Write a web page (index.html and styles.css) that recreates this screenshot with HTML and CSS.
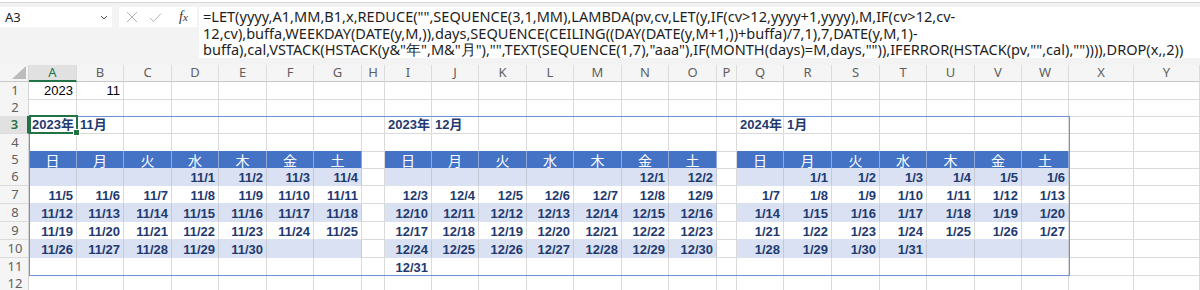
FILE: index.html
```html
<!DOCTYPE html>
<html lang="ja">
<head>
<meta charset="utf-8">
<title>Excel calendar</title>
<link rel="stylesheet" href="styles.css">
</head>
<body>
<div class="ribbon-edge"></div>
<div class="fbar">
  <div class="namebox">
    <span>A3</span>
    <svg class="chev" width="8" height="5" viewBox="0 0 8 5"><path d="M1 1 L4 4 L7 1" fill="none" stroke="#555" stroke-width="1"/></svg>
  </div>
  <div class="btns">
    <svg width="12" height="12" viewBox="0 0 12 12"><path d="M1 1 L11 11 M11 1 L1 11" stroke="#b4b4b4" stroke-width="1" fill="none"/></svg>
    <svg width="13" height="11" viewBox="0 0 13 11"><path d="M1 6 L4.5 9.5 L12 1.5" stroke="#b4b4b4" stroke-width="1" fill="none"/></svg>
    <span class="fx"><i>f</i><i class="x">x</i></span>
  </div>
  <div class="formula">
    <div class="fl">=LET(yyyy,A1,MM,B1,x,REDUCE("",SEQUENCE(3,1,MM),LAMBDA(pv,cv,LET(y,IF(cv&gt;12,yyyy+1,yyyy),M,IF(cv&gt;12,cv-</div>
    <div class="fl">12,cv),buffa,WEEKDAY(DATE(y,M,)),days,SEQUENCE(CEILING((DAY(DATE(y,M+1,))+buffa)/7,1),7,DATE(y,M,1)-</div>
    <div class="fl">buffa),cal,VSTACK(HSTACK(y&amp;"年",M&amp;"月"),"",TEXT(SEQUENCE(1,7),"aaa"),IF(MONTH(days)=M,days,"")),IFERROR(HSTACK(pv,"",cal),"")))),DROP(x,,2))</div>
  </div>
</div>

<div class="sheet">
  <div class="row colhead">
    <div class="corner"><svg width="14" height="13" viewBox="0 0 14 13"><path d="M14 0 L14 13 L0 13 Z" fill="#bcbcbc"/></svg></div>
    <div class="ch sel">A</div><div class="ch">B</div><div class="ch">C</div><div class="ch">D</div><div class="ch">E</div><div class="ch">F</div><div class="ch">G</div><div class="ch">H</div><div class="ch">I</div><div class="ch">J</div><div class="ch">K</div><div class="ch">L</div><div class="ch">M</div><div class="ch">N</div><div class="ch">O</div><div class="ch">P</div><div class="ch">Q</div><div class="ch">R</div><div class="ch">S</div><div class="ch">T</div><div class="ch">U</div><div class="ch">V</div><div class="ch">W</div><div class="ch">X</div><div class="ch">Y</div>
  </div>

  <div class="row h17">
    <div class="rh">1</div>
    <div class="c n">2023</div><div class="c n">11</div><div class="c"></div><div class="c"></div><div class="c"></div><div class="c"></div><div class="c"></div><div class="c"></div><div class="c"></div><div class="c"></div><div class="c"></div><div class="c"></div><div class="c"></div><div class="c"></div><div class="c"></div><div class="c"></div><div class="c"></div><div class="c"></div><div class="c"></div><div class="c"></div><div class="c"></div><div class="c"></div><div class="c"></div><div class="c"></div><div class="c"></div>
  </div>

  <div class="row h17">
    <div class="rh">2</div>
    <div class="c"></div><div class="c"></div><div class="c"></div><div class="c"></div><div class="c"></div><div class="c"></div><div class="c"></div><div class="c"></div><div class="c"></div><div class="c"></div><div class="c"></div><div class="c"></div><div class="c"></div><div class="c"></div><div class="c"></div><div class="c"></div><div class="c"></div><div class="c"></div><div class="c"></div><div class="c"></div><div class="c"></div><div class="c"></div><div class="c"></div><div class="c"></div><div class="c"></div>
  </div>

  <div class="row">
    <div class="rh sel">3</div>
    <div class="c t">2023年</div><div class="c t">11月</div><div class="c"></div><div class="c"></div><div class="c"></div><div class="c"></div><div class="c"></div><div class="c"></div>
    <div class="c t">2023年</div><div class="c t">12月</div><div class="c"></div><div class="c"></div><div class="c"></div><div class="c"></div><div class="c"></div><div class="c"></div>
    <div class="c t">2024年</div><div class="c t">1月</div><div class="c"></div><div class="c"></div><div class="c"></div><div class="c"></div><div class="c"></div><div class="c"></div><div class="c"></div>
  </div>

  <div class="row h17 pre">
    <div class="rh">4</div>
    <div class="c"></div><div class="c"></div><div class="c"></div><div class="c"></div><div class="c"></div><div class="c"></div><div class="c"></div><div class="c g"></div>
    <div class="c"></div><div class="c"></div><div class="c"></div><div class="c"></div><div class="c"></div><div class="c"></div><div class="c"></div><div class="c g"></div>
    <div class="c"></div><div class="c"></div><div class="c"></div><div class="c"></div><div class="c"></div><div class="c"></div><div class="c"></div><div class="c g"></div><div class="c g"></div>
  </div>

  <div class="row h17 wk">
    <div class="rh">5</div>
    <div class="c w">日</div><div class="c w">月</div><div class="c w">火</div><div class="c w">水</div><div class="c w">木</div><div class="c w">金</div><div class="c w">土</div><div class="c g"></div>
    <div class="c w">日</div><div class="c w">月</div><div class="c w">火</div><div class="c w">水</div><div class="c w">木</div><div class="c w">金</div><div class="c w">土</div><div class="c g"></div>
    <div class="c w">日</div><div class="c w">月</div><div class="c w">火</div><div class="c w">水</div><div class="c w">木</div><div class="c w">金</div><div class="c w">土</div><div class="c g"></div><div class="c g"></div>
  </div>

  <div class="row sh">
    <div class="rh">6</div>
    <div class="c"></div><div class="c"></div><div class="c"></div><div class="c d">11/1</div><div class="c d">11/2</div><div class="c d">11/3</div><div class="c d">11/4</div><div class="c g"></div>
    <div class="c"></div><div class="c"></div><div class="c"></div><div class="c"></div><div class="c"></div><div class="c d">12/1</div><div class="c d">12/2</div><div class="c g"></div>
    <div class="c"></div><div class="c d">1/1</div><div class="c d">1/2</div><div class="c d">1/3</div><div class="c d">1/4</div><div class="c d">1/5</div><div class="c d">1/6</div><div class="c g"></div><div class="c g"></div>
  </div>

  <div class="row wh">
    <div class="rh">7</div>
    <div class="c d">11/5</div><div class="c d">11/6</div><div class="c d">11/7</div><div class="c d">11/8</div><div class="c d">11/9</div><div class="c d">11/10</div><div class="c d">11/11</div><div class="c g"></div>
    <div class="c d">12/3</div><div class="c d">12/4</div><div class="c d">12/5</div><div class="c d">12/6</div><div class="c d">12/7</div><div class="c d">12/8</div><div class="c d">12/9</div><div class="c g"></div>
    <div class="c d">1/7</div><div class="c d">1/8</div><div class="c d">1/9</div><div class="c d">1/10</div><div class="c d">1/11</div><div class="c d">1/12</div><div class="c d">1/13</div><div class="c g"></div><div class="c g"></div>
  </div>

  <div class="row sh">
    <div class="rh">8</div>
    <div class="c d">11/12</div><div class="c d">11/13</div><div class="c d">11/14</div><div class="c d">11/15</div><div class="c d">11/16</div><div class="c d">11/17</div><div class="c d">11/18</div><div class="c g"></div>
    <div class="c d">12/10</div><div class="c d">12/11</div><div class="c d">12/12</div><div class="c d">12/13</div><div class="c d">12/14</div><div class="c d">12/15</div><div class="c d">12/16</div><div class="c g"></div>
    <div class="c d">1/14</div><div class="c d">1/15</div><div class="c d">1/16</div><div class="c d">1/17</div><div class="c d">1/18</div><div class="c d">1/19</div><div class="c d">1/20</div><div class="c g"></div><div class="c g"></div>
  </div>

  <div class="row wh">
    <div class="rh">9</div>
    <div class="c d">11/19</div><div class="c d">11/20</div><div class="c d">11/21</div><div class="c d">11/22</div><div class="c d">11/23</div><div class="c d">11/24</div><div class="c d">11/25</div><div class="c g"></div>
    <div class="c d">12/17</div><div class="c d">12/18</div><div class="c d">12/19</div><div class="c d">12/20</div><div class="c d">12/21</div><div class="c d">12/22</div><div class="c d">12/23</div><div class="c g"></div>
    <div class="c d">1/21</div><div class="c d">1/22</div><div class="c d">1/23</div><div class="c d">1/24</div><div class="c d">1/25</div><div class="c d">1/26</div><div class="c d">1/27</div><div class="c g"></div><div class="c g"></div>
  </div>

  <div class="row sh">
    <div class="rh">10</div>
    <div class="c d">11/26</div><div class="c d">11/27</div><div class="c d">11/28</div><div class="c d">11/29</div><div class="c d">11/30</div><div class="c"></div><div class="c"></div><div class="c g"></div>
    <div class="c d">12/24</div><div class="c d">12/25</div><div class="c d">12/26</div><div class="c d">12/27</div><div class="c d">12/28</div><div class="c d">12/29</div><div class="c d">12/30</div><div class="c g"></div>
    <div class="c d">1/28</div><div class="c d">1/29</div><div class="c d">1/30</div><div class="c d">1/31</div><div class="c"></div><div class="c"></div><div class="c"></div><div class="c g"></div><div class="c g"></div>
  </div>

  <div class="row h17">
    <div class="rh">11</div>
    <div class="c"></div><div class="c"></div><div class="c"></div><div class="c"></div><div class="c"></div><div class="c"></div><div class="c"></div><div class="c"></div>
    <div class="c d">12/31</div><div class="c"></div><div class="c"></div><div class="c"></div><div class="c"></div><div class="c"></div><div class="c"></div><div class="c"></div>
    <div class="c"></div><div class="c"></div><div class="c"></div><div class="c"></div><div class="c"></div><div class="c"></div><div class="c"></div><div class="c"></div><div class="c"></div>
  </div>

  <div class="row">
    <div class="rh">12</div>
    <div class="c"></div><div class="c"></div><div class="c"></div><div class="c"></div><div class="c"></div><div class="c"></div><div class="c"></div><div class="c"></div><div class="c"></div><div class="c"></div><div class="c"></div><div class="c"></div><div class="c"></div><div class="c"></div><div class="c"></div><div class="c"></div><div class="c"></div><div class="c"></div><div class="c"></div><div class="c"></div><div class="c"></div><div class="c"></div><div class="c"></div><div class="c"></div><div class="c"></div>
  </div>

  <div class="spill"></div>
  <div class="selbox"><span class="handle"></span></div>
</div>
</body>
</html>
```

FILE: styles.css
```css
html, body {
  margin: 0;
  padding: 0;
}
body {
  width: 1200px;
  height: 290px;
  overflow: hidden;
  background: #ffffff;
  font-family: "Liberation Sans", "Noto Sans CJK JP", sans-serif;
  color: #000;
}

/* ---------- formula bar ---------- */
.ribbon-edge {
  height: 2px;
  background: #ffffff;
  border-bottom: 1px solid #d6d6d6;
}
.fbar {
  height: 62px;
  box-sizing: border-box;
  padding-top: 4px;
  background: #f3f3f3;
  display: flex;
  align-items: flex-start;
}
.namebox {
  width: 112px;
  height: 20px;
  background: #ffffff;
  box-sizing: border-box;
  padding: 0 4px 0 5px;
  display: flex;
  align-items: center;
  justify-content: space-between;
  font-family: "Noto Sans", sans-serif;
  font-size: 13px;
  color: #222;
}
.btns {
  margin-left: 7px;
  width: 78px;
  height: 20px;
  background: #ffffff;
  box-sizing: border-box;
  padding-left: 7px;
  display: flex;
  align-items: center;
  gap: 11px;
}
.fx {
  font-family: "Liberation Serif", serif;
  font-size: 14px;
  color: #333;
  margin-left: 6px;
  line-height: 1;
}
.fx .x { font-size: 11px; }
.formula {
  margin-left: 2px;
  flex: 1;
  height: 51px;
  background: #ffffff;
  box-sizing: border-box;
  padding: 1px 0 0 4px;
  font-family: "Noto Sans", sans-serif;
  font-size: 14.55px;
  color: #1e1e1e;
  white-space: nowrap;
}
.fl {
  height: 16.5px;
  line-height: 16px;
}

/* ---------- sheet ---------- */
.sheet {
  position: relative;
}
.row {
  display: grid;
  grid-template-columns: 29px 48px 47px 48px 47px 48px 47px 48px 23px 47px 47px 48px 47px 48px 47px 48px 20px 47px 48px 48px 47px 48px 47px 47px 65px 66px;
  height: 18px;
}
.row.h17 { height: 17px; }

.colhead { height: 17px; background: #f5f5f5; }
.corner {
  border-right: 1px solid #d4d4d4;
  border-bottom: 1px solid #c8c8c8;
  display: flex;
  align-items: flex-end;
  justify-content: flex-end;
  padding: 0 2px 2px 0;
}
.ch {
  border-right: 1px solid #dcdcdc;
  border-bottom: 1px solid #c8c8c8;
  font-family: "Noto Sans", sans-serif;
  font-size: 13px;
  line-height: 14px;
  color: #5f5f5f;
  text-align: center;
}
.ch.sel {
  background: #e1e1e1;
  color: #217346;
  border-bottom: 2px solid #217346;
}

.rh {
  background: #f5f5f5;
  border-right: 1px solid #d4d4d4;
  border-bottom: 1px solid #dcdcdc;
  font-family: "Noto Sans", sans-serif;
  font-size: 13px;
  line-height: 17px;
  color: #5f5f5f;
  text-align: center;
  padding-left: 2px;
}
.rh.sel {
  background: #e1e1e1;
  color: #217346;
  font-weight: 600;
  border-right: 2px solid #217346;
}

.c {
  border-right: 1px solid #dadada;
  border-bottom: 1px solid #dadada;
  font-size: 13px;
  line-height: 13px;
  white-space: nowrap;
  display: flex;
  align-items: flex-end;
  overflow: visible;
}
.c.n {
  justify-content: flex-end;
  padding-right: 3px;
  padding-bottom: 2px;
}
.c.t {
  color: #1f3a70;
  font-weight: bold;
  padding-left: 3px;
  padding-bottom: 2px;
}
.c.d {
  justify-content: flex-end;
  padding-right: 3px;
  padding-bottom: 1px;
  color: #1f3a70;
  font-weight: bold;
}

/* calendar styling */
.pre .c:not(.g) { border-bottom-color: #4472c4; }
.wk .c.w {
  background: #4472c4;
  color: #ffffff;
  border-right-color: #8ea8d8;
  border-bottom-color: #4472c4;
  justify-content: center;
  font-family: "Noto Sans CJK JP", sans-serif;
  font-size: 14px;
  line-height: 15px;
}
.sh .c:not(.g) {
  background: #d9e1f2;
  border-right-color: #c4c9d3;
  border-bottom-color: #d9e1f2;
}
.wh .c:not(.g) { border-bottom-color: #d9e1f2; }

/* overlays */
.spill {
  position: absolute;
  left: 29px;
  top: 51px;
  width: 1041px;
  height: 160px;
  box-sizing: border-box;
  border: 1px solid #6f90d8;
  pointer-events: none;
}
.selbox {
  position: absolute;
  left: 29px;
  top: 50px;
  width: 49px;
  height: 19px;
  box-sizing: border-box;
  border: 2px solid #217346;
}
.handle {
  position: absolute;
  right: -4px;
  bottom: -4px;
  width: 5px;
  height: 5px;
  background: #217346;
  border: 1px solid #ffffff;
}
```
